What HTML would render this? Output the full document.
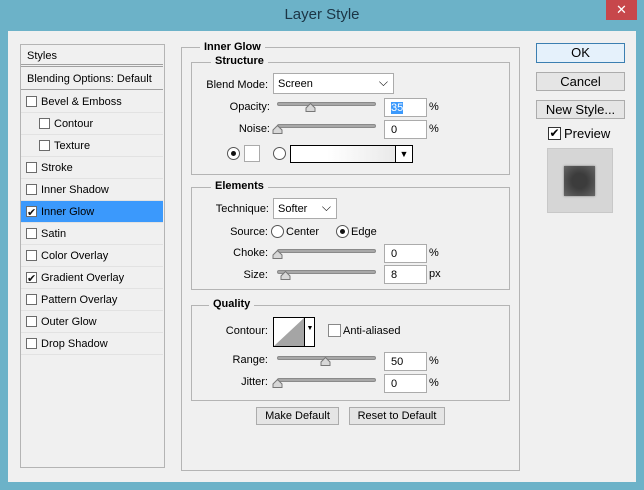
<!DOCTYPE html>
<html><head><style>
*{margin:0;padding:0;box-sizing:border-box}
body{width:644px;height:490px;background:#6cb2c8;font-family:"Liberation Sans",Tahoma,sans-serif;font-size:11px;color:#000;position:relative;overflow:hidden}
.a{position:absolute}
#title{left:0;top:6px;width:644px;text-align:center;font-size:15px;color:#1b3545}
#close{left:606px;top:0;width:31px;height:20px;background:#c7474b;color:#fff;text-align:center;font-size:13px;line-height:20px}
#client{left:8px;top:31px;width:628px;height:451px;background:#f0f0f0}
.box{position:absolute;border:1px solid #b4b4b4}
.lbl{position:absolute;background:#f0f0f0;padding:0 4px;font-weight:bold}
.row{position:absolute;left:21px;width:142px;height:22px;border-bottom:1px solid #e2e2e2;line-height:22px}
.cb{position:absolute;width:11px;height:11px;border:1px solid #6b6b6b;background:#fff;top:5px}
.cb.on::after{content:"✔";position:absolute;left:0;top:-5px;font-size:11px;color:#111}
.r{text-align:right;position:absolute;width:120px}
.track{position:absolute;width:99px;height:4px;background:#a8a8a8;border-radius:2px;border:1px solid #8a8a8a}
.thumb{position:absolute;width:11px;height:9px}
.inp{position:absolute;width:43px;height:19px;border:1px solid #ababab;background:#fff;padding-left:6px;line-height:18px}
.sel{position:absolute;height:21px;border:1px solid #ababab;background:#fff;padding-left:4px;line-height:20px}
.sel::after{content:"⌵";position:absolute;right:5px;top:-2px;font-size:12px}
.btn{position:absolute;background:#e5e5e5;border:1px solid #acacac;text-align:center}
.rad{position:absolute;width:13px;height:13px;border:1px solid #555;border-radius:50%;background:#fff}
.rad.on::after{content:"";position:absolute;left:3px;top:3px;width:5px;height:5px;border-radius:50%;background:#111}
</style></head><body>
<div class="a" id="title">Layer Style</div>
<div class="a" id="close">✕</div>
<div class="a" id="client"></div>

<div class="box" style="left:20px;top:44px;width:145px;height:424px;background:#f0f0f0"></div>
<div class="row" style="top:45px;height:22px;padding-left:6px;border-bottom:3px double #a0a0a0">Styles</div>
<div class="row" style="top:68px;padding-left:6px;border-bottom:1px solid #a0a0a0">Blending Options: Default</div>
<div class="row" style="top:91px"><div class="cb" style="left:5px"></div><span style="position:absolute;left:20px">Bevel &amp; Emboss</span></div>
<div class="row" style="top:113px"><div class="cb" style="left:18px"></div><span style="position:absolute;left:33px">Contour</span></div>
<div class="row" style="top:135px"><div class="cb" style="left:18px"></div><span style="position:absolute;left:33px">Texture</span></div>
<div class="row" style="top:157px"><div class="cb" style="left:5px"></div><span style="position:absolute;left:20px">Stroke</span></div>
<div class="row" style="top:179px"><div class="cb" style="left:5px"></div><span style="position:absolute;left:20px">Inner Shadow</span></div>
<div class="row" style="top:201px;background:#3b99fc"><div class="cb on" style="left:5px"></div><span style="position:absolute;left:20px">Inner Glow</span></div>
<div class="row" style="top:223px"><div class="cb" style="left:5px"></div><span style="position:absolute;left:20px">Satin</span></div>
<div class="row" style="top:245px"><div class="cb" style="left:5px"></div><span style="position:absolute;left:20px">Color Overlay</span></div>
<div class="row" style="top:267px"><div class="cb on" style="left:5px"></div><span style="position:absolute;left:20px">Gradient Overlay</span></div>
<div class="row" style="top:289px"><div class="cb" style="left:5px"></div><span style="position:absolute;left:20px">Pattern Overlay</span></div>
<div class="row" style="top:311px"><div class="cb" style="left:5px"></div><span style="position:absolute;left:20px">Outer Glow</span></div>
<div class="row" style="top:333px"><div class="cb" style="left:5px"></div><span style="position:absolute;left:20px">Drop Shadow</span></div>

<div class="box" style="left:181px;top:47px;width:339px;height:424px"></div>
<div class="lbl" style="left:200px;top:41px">Inner Glow</div>

<div class="box" style="left:191px;top:62px;width:319px;height:113px"></div>
<div class="lbl" style="left:211px;top:55px">Structure</div>
<div class="r" style="left:148px;top:79px">Blend Mode:</div>
<div class="sel" style="left:273px;top:73px;width:121px">Screen</div>
<div class="r" style="left:150px;top:101px">Opacity:</div>
<div class="track" style="left:277px;top:102px"></div>
<svg class="thumb" style="left:305px;top:103px" viewBox="0 0 11 9"><path d="M1 8.5 L1 5 L5.5 0.5 L10 5 L10 8.5Z" fill="#d8d8d8" stroke="#777"/></svg>
<div class="inp" style="left:384px;top:98px"><span style="background:#3b99fc;color:#fff">35</span></div>
<div style="position:absolute;left:429px;top:101px">%</div>
<div class="r" style="left:150px;top:123px">Noise:</div>
<div class="track" style="left:277px;top:124px"></div>
<svg class="thumb" style="left:272px;top:125px" viewBox="0 0 11 9"><path d="M1 8.5 L1 5 L5.5 0.5 L10 5 L10 8.5Z" fill="#d8d8d8" stroke="#777"/></svg>
<div class="inp" style="left:384px;top:120px">0</div>
<div style="position:absolute;left:429px;top:123px">%</div>
<div class="rad on" style="left:227px;top:147px"></div>
<div style="position:absolute;left:244px;top:145px;width:16px;height:17px;border:1px solid #aaa;background:#fff"></div>
<div class="rad" style="left:273px;top:147px"></div>
<div style="position:absolute;left:290px;top:145px;width:123px;height:18px;border:1px solid #000;background:linear-gradient(90deg,#fff 30%,#e4e4e4)"></div>
<div style="position:absolute;left:395px;top:146px;width:17px;height:16px;border-left:1px solid #000;background:#fff;text-align:center;font-size:9px;line-height:16px">▼</div>

<div class="box" style="left:191px;top:187px;width:319px;height:103px"></div>
<div class="lbl" style="left:211px;top:180px">Elements</div>
<div class="r" style="left:149px;top:203px">Technique:</div>
<div class="sel" style="left:273px;top:198px;width:64px">Softer</div>
<div class="r" style="left:148px;top:226px">Source:</div>
<div class="rad" style="left:271px;top:225px"></div><div style="position:absolute;left:286px;top:226px">Center</div>
<div class="rad on" style="left:336px;top:225px"></div><div style="position:absolute;left:351px;top:226px">Edge</div>
<div class="r" style="left:148px;top:247px">Choke:</div>
<div class="track" style="left:277px;top:249px"></div>
<svg class="thumb" style="left:272px;top:250px" viewBox="0 0 11 9"><path d="M1 8.5 L1 5 L5.5 0.5 L10 5 L10 8.5Z" fill="#d8d8d8" stroke="#777"/></svg>
<div class="inp" style="left:384px;top:244px">0</div>
<div style="position:absolute;left:429px;top:247px">%</div>
<div class="r" style="left:148px;top:269px">Size:</div>
<div class="track" style="left:277px;top:270px"></div>
<svg class="thumb" style="left:280px;top:271px" viewBox="0 0 11 9"><path d="M1 8.5 L1 5 L5.5 0.5 L10 5 L10 8.5Z" fill="#d8d8d8" stroke="#777"/></svg>
<div class="inp" style="left:384px;top:265px">8</div>
<div style="position:absolute;left:429px;top:268px">px</div>

<div class="box" style="left:191px;top:305px;width:319px;height:96px"></div>
<div class="lbl" style="left:209px;top:298px">Quality</div>
<div class="r" style="left:148px;top:325px">Contour:</div>
<div style="position:absolute;left:273px;top:317px;width:42px;height:30px;border:1px solid #000;background:#fff;overflow:hidden">
<svg width="31" height="28" style="position:absolute;left:0;top:0"><path d="M0 28 L30 0 L30 28Z" fill="#a5a5a5"/></svg>
<div style="position:absolute;left:30px;top:0;width:11px;height:28px;border-left:1px solid #000;font-size:7px;text-align:center;line-height:22px">▼</div></div>
<div style="position:absolute;left:328px;top:324px;width:13px;height:13px;border:1px solid #888;background:#fff"></div>
<div style="position:absolute;left:343px;top:325px">Anti-aliased</div>
<div class="r" style="left:148px;top:354px">Range:</div>
<div class="track" style="left:277px;top:356px"></div>
<svg class="thumb" style="left:320px;top:357px" viewBox="0 0 11 9"><path d="M1 8.5 L1 5 L5.5 0.5 L10 5 L10 8.5Z" fill="#d8d8d8" stroke="#777"/></svg>
<div class="inp" style="left:384px;top:352px">50</div>
<div style="position:absolute;left:429px;top:355px">%</div>
<div class="r" style="left:148px;top:376px">Jitter:</div>
<div class="track" style="left:277px;top:378px"></div>
<svg class="thumb" style="left:272px;top:379px" viewBox="0 0 11 9"><path d="M1 8.5 L1 5 L5.5 0.5 L10 5 L10 8.5Z" fill="#d8d8d8" stroke="#777"/></svg>
<div class="inp" style="left:384px;top:374px">0</div>
<div style="position:absolute;left:429px;top:377px">%</div>

<div class="btn" style="left:256px;top:407px;width:83px;height:18px;line-height:16px">Make Default</div>
<div class="btn" style="left:349px;top:407px;width:96px;height:18px;line-height:16px">Reset to Default</div>

<div class="btn" style="left:536px;top:43px;width:89px;height:20px;line-height:18px;font-size:13px;border-color:#3c7fb1;background:#e5f1fb">OK</div>
<div class="btn" style="left:536px;top:72px;width:89px;height:19px;line-height:17px;font-size:13px">Cancel</div>
<div class="btn" style="left:536px;top:100px;width:89px;height:19px;line-height:17px;font-size:13px">New Style...</div>
<div style="position:absolute;left:548px;top:127px;width:13px;height:13px;border:1px solid #333;background:#fff;font-size:12px;line-height:11px;text-align:center">✔</div>
<div style="position:absolute;left:564px;top:126px;font-size:13px">Preview</div>
<div style="position:absolute;left:547px;top:148px;width:66px;height:65px;background:#d6d6d6;border:1px solid #c8c8c8"></div>
<div style="position:absolute;left:564px;top:166px;width:31px;height:30px;background:radial-gradient(circle,#3c3c3c 35%,#666 100%);box-shadow:0 0 2px #777"></div>
</body></html>
